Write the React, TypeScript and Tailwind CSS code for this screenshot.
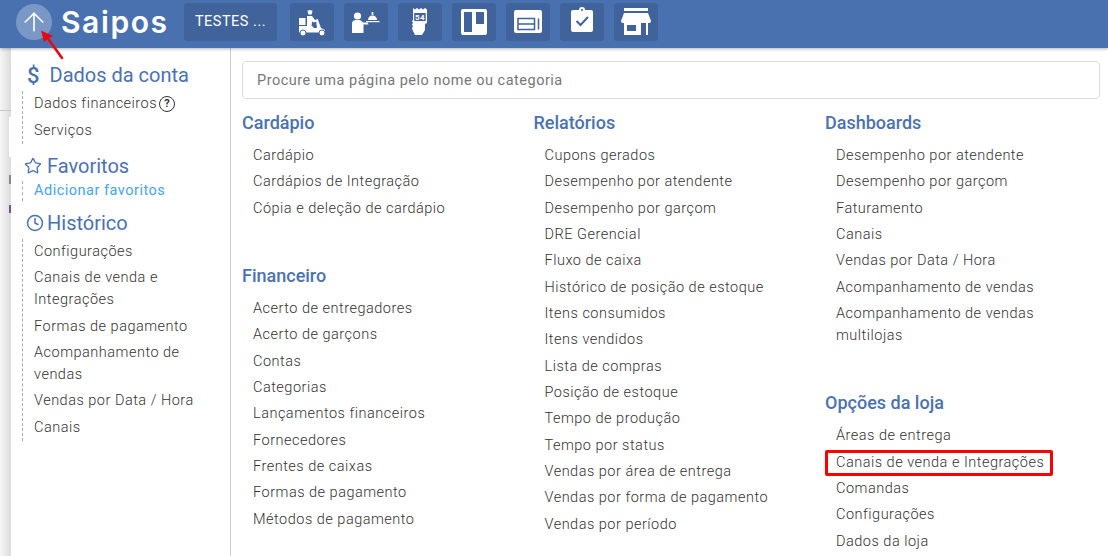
import { ArrowUp, Star, Clock } from 'lucide-react'

const columns = [
  [
    { title: 'Cardápio', items: ['Cardápio', 'Cardápios de Integração', 'Cópia e deleção de cardápio'] },
    {
      title: 'Financeiro',
      items: [
        'Acerto de entregadores',
        'Acerto de garçons',
        'Contas',
        'Categorias',
        'Lançamentos financeiros',
        'Fornecedores',
        'Frentes de caixas',
        'Formas de pagamento',
        'Métodos de pagamento',
      ],
    },
  ],
  [
    {
      title: 'Relatórios',
      items: [
        'Cupons gerados',
        'Desempenho por atendente',
        'Desempenho por garçom',
        'DRE Gerencial',
        'Fluxo de caixa',
        'Histórico de posição de estoque',
        'Itens consumidos',
        'Itens vendidos',
        'Lista de compras',
        'Posição de estoque',
        'Tempo de produção',
        'Tempo por status',
        'Vendas por área de entrega',
        'Vendas por forma de pagamento',
        'Vendas por período',
      ],
    },
  ],
  [
    {
      title: 'Dashboards',
      items: [
        'Desempenho por atendente',
        'Desempenho por garçom',
        'Faturamento',
        'Canais',
        'Vendas por Data / Hora',
        'Acompanhamento de vendas',
        'Acompanhamento de vendas multilojas',
      ],
    },
    {
      title: 'Opções da loja',
      items: ['Áreas de entrega', 'Canais de venda e Integrações', 'Comandas', 'Configurações', 'Dados da loja'],
    },
  ],
]

function NavIcon({ children }: { children: React.ReactNode }) {
  return (
    <div className="flex h-[38px] w-[44px] items-center justify-center rounded-[3px] bg-[#41639b]">
      <svg width="30" height="30" viewBox="0 0 30 30" fill="white">
        {children}
      </svg>
    </div>
  )
}

function SideItem({ label }: { label: string }) {
  return <div className="w-[170px] py-[2.2px] leading-[22px]">{label}</div>
}

export default function App() {
  return (
    <div className="relative h-[556px] w-[1108px] overflow-hidden bg-white font-['Roboto',sans-serif] text-[14.5px] font-light tracking-[0.5px] text-[#333]">
      {/* Header */}
      <header className="relative flex h-[48px] items-center bg-[#4971b0] pb-[4px] pl-[16px] shadow-[0_1px_3px_rgba(0,0,0,0.3)]">
        <div className="flex h-[36px] w-[36px] items-center justify-center rounded-full bg-[#7a97c6]">
          <ArrowUp size={30} strokeWidth={1.3} color="white" />
        </div>
        <div className="ml-[9px] w-[115px] font-['Inter',sans-serif] text-[30px] leading-none font-semibold tracking-[1.6px] text-white">
          Saipos
        </div>
        <div className="ml-[8px] flex h-[38px] w-[93px] items-center justify-center rounded-[3px] bg-[#41639b] text-[14.5px] font-normal text-white">
          TESTES ...
        </div>
        <div className="ml-[13px] flex gap-[10px]">
          {/* delivery scooter */}
          <NavIcon>
            <circle cx="13" cy="5.500" r="2.200" />
            <path d="M10.500 3.500h5v1h-5z" />
            <path d="M10 9h5l3 4 3-1v1.500l-4 2-2-1-.5 6h-4.500z" />
            <rect x="2" y="11" width="6.500" height="7" />
            <path d="M2 19h13l2 2h3l-1-8h2l3 8 4 2v2.500H2z" />
            <circle cx="6" cy="26" r="3" stroke="#41639b" />
            <circle cx="25" cy="26" r="3" stroke="#41639b" />
          </NavIcon>
          {/* waiter with tray */}
          <NavIcon>
            <circle cx="6.500" cy="9" r="3.600" />
            <path d="M1 26v-9c0-2.500 1.500-4 4-4h3c2 0 3 1.500 4 2.500h4.500l1 2H13l-.5-.5V26z" />
            <path d="M15 14h13.500v1.200H15z" />
            <path d="M17 13a4.500 4.500 0 0 1 9 0z" />
            <rect x="20.700" y="5" width="1.600" height="3" />
          </NavIcon>
          {/* receipt in hand */}
          <NavIcon>
            <path d="M8 1l2 1.500L12 1l2 1.500L16 1l2 1.500L20 1l2 1.500V16l-2 1v6l-3 5h-7l-2-4-1-3 1-1.500-1-2 1-1.500-1-2 1-1z" />
            <rect x="9.200" y="6" width="11.500" height="8" fill="#41639b" />
            <text x="15" y="13" textAnchor="middle" fontSize="8" fontWeight="700" fill="white" fontFamily="Roboto, sans-serif">
              54
            </text>
          </NavIcon>
          {/* kanban board */}
          <NavIcon>
            <path
              fillRule="evenodd"
              d="M4 2h22a2 2 0 0 1 2 2v22a2 2 0 0 1-2 2H4a2 2 0 0 1-2-2V4a2 2 0 0 1 2-2zm1 3v20h8V5zm12 0v12h8V5z"
            />
          </NavIcon>
          {/* panel layout */}
          <NavIcon>
            <rect x="1" y="3" width="28" height="23" rx="2" />
            <path d="M5 11.500h16.500v11H5zM5 17h16.500M25.500 11.500v11" fill="none" stroke="#41639b" strokeWidth="1.500" />
          </NavIcon>
          {/* checklist clipboard */}
          <NavIcon>
            <path
              fillRule="evenodd"
              d="M6 3h6a3 3 0 0 1 6 0h6a2 2 0 0 1 2 2v18a2 2 0 0 1-2 2H6a2 2 0 0 1-2-2V5a2 2 0 0 1 2-2zm9-1a1 1 0 1 0 0 2 1 1 0 0 0 0-2z"
            />
            <path d="M9.500 14l4 4 7.500-8" fill="none" stroke="#41639b" strokeWidth="2" />
          </NavIcon>
          {/* storefront */}
          <NavIcon>
            <rect x="3" y="1" width="24" height="3" />
            <path d="M3 6h24l3 8c0 1.500-1 2-2 2H2c-1 0-2-.5-2-2z" />
            <path
              fillRule="evenodd"
              d="M3 16h24v12h-2V16h-5v12H3zm3 2v6h9v-6z"
            />
          </NavIcon>
        </div>
      </header>

      {/* Red arrow callout */}
      <svg className="absolute top-[30px] left-[38px]" width="30" height="32" viewBox="0 0 30 32">
        <path d="M24 28 11 10" stroke="#e8090f" strokeWidth="2.600" strokeLinecap="round" />
        <path d="M3 0.500 15 6 6 12z" fill="#e8090f" />
      </svg>

      <div className="flex h-[508px]">
        {/* Page behind the menu */}
        <div className="flex w-[11px] shrink-0 flex-col items-end bg-gradient-to-r from-[#f6f6f6] to-[#dcdcdc]">
          <div className="h-[63px] w-full border-b border-[#c8c8c8]" />
          <div className="mt-[6px] h-[40px] w-[2px] bg-white" />
          <div className="mt-[18px] h-[9px] w-[2px] bg-[#8a8a8a]" />
          <div className="mt-[21px] h-[8px] w-[2px] bg-[#7a4f9a]" />
        </div>

        {/* Sidebar */}
        <aside className="w-[220px] shrink-0 border-r border-[#cfcfcf] pt-[14px] pl-[11px]">
          <div className="flex h-[26px] items-center text-[20px] font-normal tracking-normal text-[#4a72b3]">
            <span className="mr-[10px] ml-[5px] text-[22px] font-medium">$</span>
            Dados da conta
          </div>
          <div className="mt-[3px] border-l border-dashed border-[#aaa] pl-[11px]">
            <div className="flex w-[170px] items-center py-[2.2px] leading-[22px]">
              Dados financeiros
              <span className="ml-[2px] flex h-[16px] w-[16px] items-center justify-center rounded-full border border-[#333] text-[11px] font-bold tracking-normal">
                ?
              </span>
            </div>
            <SideItem label="Serviços" />
          </div>
          <div className="mt-[9px] flex h-[26px] items-center text-[20px] font-normal tracking-normal text-[#4a72b3]">
            <Star size={18} strokeWidth={1.8} className="mr-[5px] ml-[2px]" />
            Favoritos
          </div>
          <div className="mt-[2px] border-l border-dashed border-[#aaa] pl-[11px]">
            <div className="leading-[20px] font-normal text-[#42a5f5]">Adicionar favoritos</div>
          </div>
          <div className="mt-[9px] flex h-[26px] items-center text-[20px] font-normal tracking-normal text-[#4a72b3]">
            <Clock size={18} strokeWidth={2} className="mr-[3px] ml-[4px]" />
            Histórico
          </div>
          <div className="mt-[3px] border-l border-dashed border-[#aaa] pl-[11px]">
            {[
              'Configurações',
              'Canais de venda e Integrações',
              'Formas de pagamento',
              'Acompanhamento de vendas',
              'Vendas por Data / Hora',
              'Canais',
            ].map((s) => (
              <SideItem key={s} label={s} />
            ))}
          </div>
        </aside>

        {/* Main */}
        <main className="min-w-0 flex-1 pt-[13px] pr-[8px] pl-[11px]">
          <div className="flex h-[38px] items-center rounded-[4px] border border-[#ddd] pt-[2px] pl-[14px] font-normal text-[#777]">
            Procure uma página pelo nome ou categoria
          </div>
          <div className="mt-[11px] flex">
            {columns.map((col, i) => (
              <div key={i} className="w-[291.500px] shrink-0">
                {col.map((g) => (
                  <section key={g.title} className="mb-[41px]">
                    <h2 className="mb-[7px] h-[26px] text-[18px] leading-[26px] font-medium tracking-normal text-[#4a72b3]">
                      {g.title}
                    </h2>
                    {g.items.map((item) => (
                      <div key={item} className="relative w-[250px] py-[2.170px] pl-[11px] leading-[22px]">
                        {item}
                        {item === 'Canais de venda e Integrações' && (
                          <span className="absolute top-[0px] left-[0px] h-[26px] w-[228px] rounded-[2px] border-[3px] border-[#f00]" />
                        )}
                      </div>
                    ))}
                  </section>
                ))}
              </div>
            ))}
          </div>
        </main>
      </div>
    </div>
  )
}
